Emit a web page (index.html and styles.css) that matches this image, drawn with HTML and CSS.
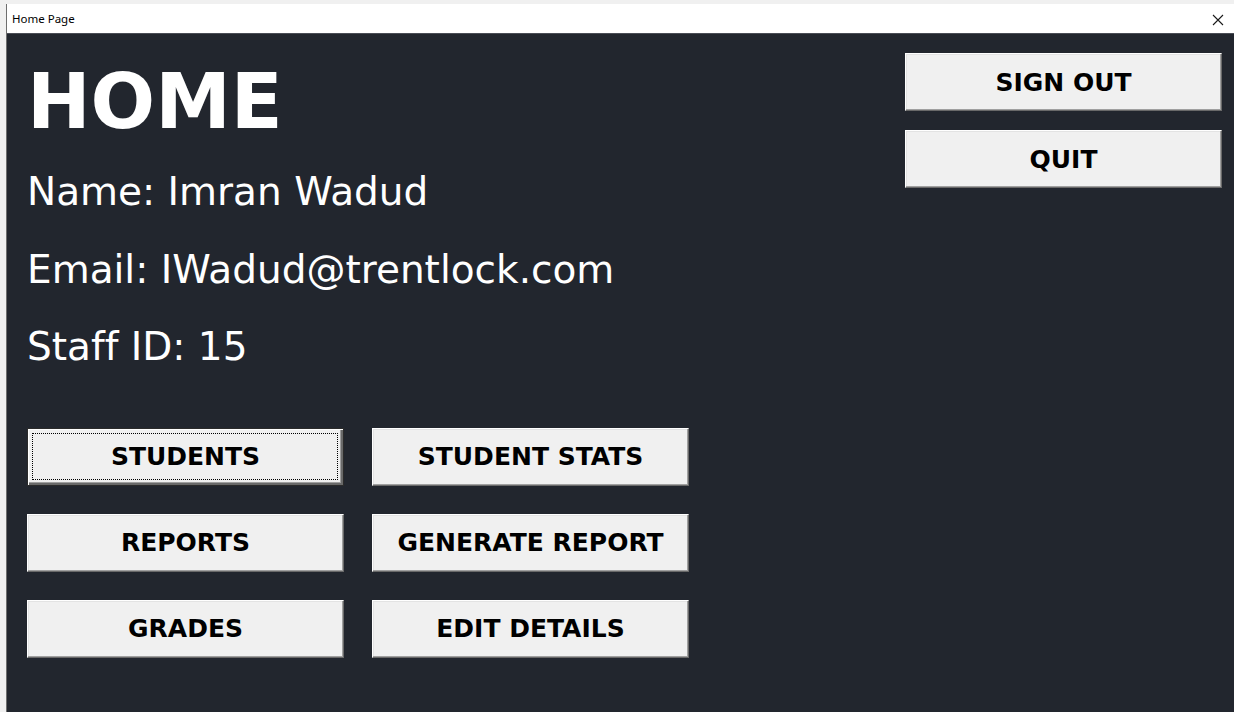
FILE: index.html
```html
<!DOCTYPE html>
<html>
<head>
<meta charset="utf-8">
<title>Home Page</title>
<link rel="stylesheet" href="styles.css">
</head>
<body>
<div class="window">
  <div class="titlebar">
    <span class="title">Home Page</span>
    <span class="close">
      <svg width="12" height="12" viewBox="0 0 12 12"><path d="M1 1 L11 11 M11 1 L1 11" stroke="#1a1a1a" stroke-width="1.1" fill="none"/></svg>
    </span>
  </div>
  <div class="content">
    <div class="left">
      <h1 class="heading">HOME</h1>
      <div class="info">Name: Imran Wadud</div>
      <div class="info">Email: IWadud@trentlock.com</div>
      <div class="info">Staff ID: 15</div>
      <div class="grid">
        <button class="btn focused">STUDENTS</button>
        <button class="btn">STUDENT STATS</button>
        <button class="btn">REPORTS</button>
        <button class="btn">GENERATE REPORT</button>
        <button class="btn">GRADES</button>
        <button class="btn">EDIT DETAILS</button>
      </div>
    </div>
    <div class="right">
      <button class="btn">SIGN OUT</button>
      <button class="btn">QUIT</button>
    </div>
  </div>
</div>
</body>
</html>
```
FILE: styles.css
```css
html, body {
  margin: 0;
  padding: 0;
  height: 100%;
}
body {
  background: #f0f0f0;
  overflow: hidden;
}
.window {
  margin-left: 6px;
  margin-top: 4px;
  height: calc(100% - 4px);
  border-left: 1px solid #6e6e6e;
  display: flex;
  flex-direction: column;
}
.titlebar {
  height: 29px;
  background: #ffffff;
  border-bottom: 1px solid #4a4d55;
  display: flex;
  align-items: center;
  justify-content: space-between;
  padding: 0 10px 0 5px;
  font-family: "Noto Sans", "Open Sans", sans-serif;
  font-size: 11.5px;
  color: #000;
}
.title {
  margin-top: -1px;
}
.close {
  display: flex;
  width: 12px;
  height: 12px;
  margin-top: 2px;
}
.content {
  flex: 1;
  background: #22262e;
  display: flex;
  font-family: "DejaVu Sans", Verdana, sans-serif;
  font-variant-ligatures: none;
}
.left {
  padding-left: 20px;
  padding-top: 30px;
  display: flex;
  flex-direction: column;
}
.heading {
  margin: 0;
  font-size: 76px;
  line-height: 76px;
  font-weight: bold;
  color: #ffffff;
}
.info {
  font-size: 39px;
  line-height: 77.5px;
  color: #ffffff;
  padding-left: 0;
}
.heading + .info {
  margin-top: 13px;
}
.grid {
  margin-top: 42px;
  display: grid;
  grid-template-columns: 317px 317px;
  grid-auto-rows: 58px;
  column-gap: 28px;
  row-gap: 28px;
}
.right {
  margin-left: auto;
  padding-right: 12px;
  padding-top: 19px;
  display: flex;
  flex-direction: column;
  gap: 19px;
}
.right .btn {
  width: 317px;
  height: 58px;
}
.btn {
  position: relative;
  box-sizing: border-box;
  margin: 0;
  padding: 0;
  background: #f0f0f0;
  border-style: solid;
  border-width: 1px;
  border-color: #ffffff #696969 #696969 #ffffff;
  box-shadow: inset -1px -1px 0 #a0a0a0, inset 1px 1px 0 #e3e3e3;
  font-family: "DejaVu Sans", Verdana, sans-serif;
  font-variant-ligatures: none;
  font-weight: bold;
  font-size: 25px;
  color: #000;
  text-align: center;
}
.btn.focused {
  border-color: #2b2b2b;
  box-shadow: inset 1px 1px 0 #ffffff, inset -2px -2px 0 #696969, inset -3px -3px 0 #a0a0a0;
}
.btn.focused::after {
  content: "";
  position: absolute;
  left: 4px;
  top: 4px;
  right: 5px;
  bottom: 5px;
  border: 1px dotted #000;
}
```
